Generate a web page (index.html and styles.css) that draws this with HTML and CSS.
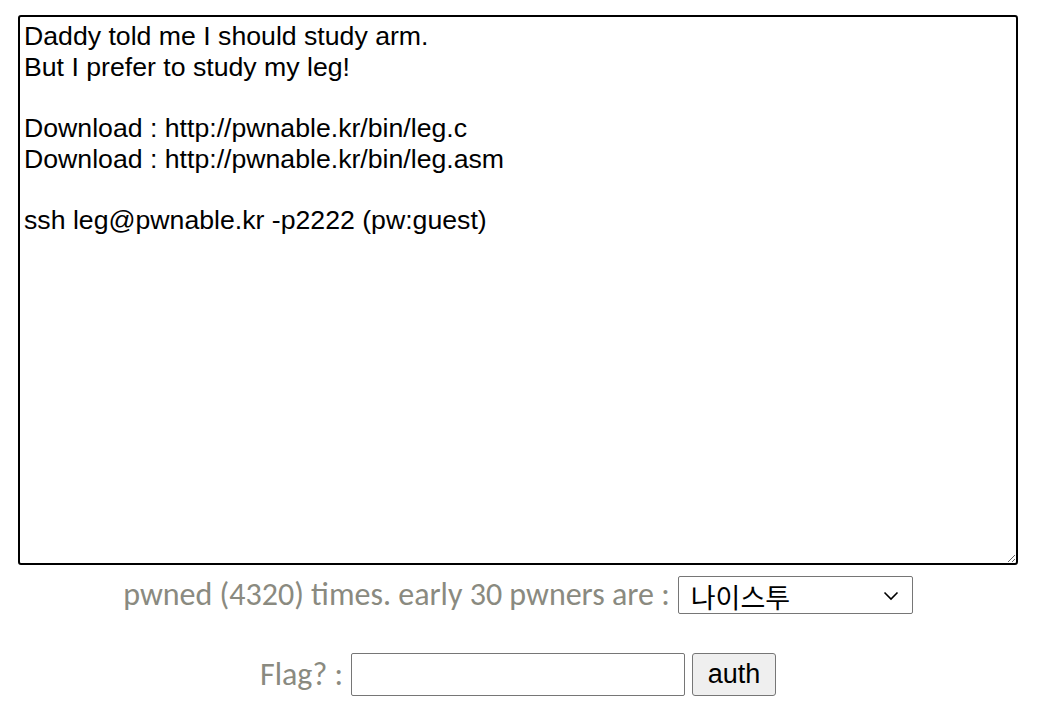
FILE: index.html
```html
<!DOCTYPE html>
<html>
<head>
<meta charset="utf-8">
<link rel="stylesheet" href="styles.css">
</head>
<body>
<div class="page">
<textarea class="desc" readonly>Daddy told me I should study arm.
But I prefer to study my leg!

Download : http://pwnable.kr/bin/leg.c
Download : http://pwnable.kr/bin/leg.asm

ssh leg@pwnable.kr -p2222 (pw:guest)
</textarea>
<div class="row stats">
<span class="label">pwned (4320) times. early 30 pwners are :</span>
<span class="select-wrap">
<select class="pwners"><option>나이스투</option></select>
<svg class="chev" width="16" height="10" viewBox="0 0 16 10"><path d="M1.5 1.5 L8 8 L14.5 1.5" fill="none" stroke="#000" stroke-width="1.6"/></svg>
</span>
</div>
<div class="row flag">
<span class="label">Flag? :</span>
<input class="flag-input" type="text">
<button class="auth">auth</button>
</div>
</div>
</body>
</html>
```

FILE: styles.css
```css
html, body {
  margin: 0;
  padding: 0;
  background: #ffffff;
}
.page {
  width: 1000px;
  padding: 15px 0 0 18px;
}
.desc {
  display: block;
  box-sizing: border-box;
  width: 1000px;
  height: 550px;
  margin: 0;
  border: 2px solid #000000;
  border-radius: 3px;
  padding: 4px 4px;
  font-family: "Liberation Sans", Arial, sans-serif;
  font-size: 26.67px;
  line-height: 1.15;
  color: #000000;
  resize: both;
  outline: none;
}
.row {
  display: flex;
  justify-content: center;
  align-items: center;
}
.stats {
  margin-top: 11px;
  height: 38px;
}
.flag {
  margin-top: 39px;
  height: 43px;
}
.label {
  font-family: Calibri, Carlito, "Open Sans", sans-serif;
  font-size: 32px;
  line-height: 38px;
  color: #8a8a80;
  margin-right: 8px;
}
.select-wrap {
  position: relative;
  display: inline-block;
  height: 38px;
}
.pwners {
  -webkit-appearance: none;
  appearance: none;
  box-sizing: border-box;
  width: 235px;
  height: 38px;
  margin: 0;
  border: 1px solid #767676;
  border-radius: 2px;
  background: #ffffff;
  font-family: "Noto Sans CJK KR", sans-serif;
  font-size: 27px;
  padding: 0 0 0 12px;
  color: #000;
}
.chev {
  position: absolute;
  right: 14px;
  top: 15px;
  pointer-events: none;
}
.flag-input {
  box-sizing: border-box;
  width: 334px;
  height: 43px;
  border: 1px solid #767676;
  border-radius: 2px;
  margin: 0;
}
.auth {
  box-sizing: border-box;
  width: 84px;
  height: 43px;
  margin-left: 7px;
  border: 1px solid #767676;
  border-radius: 3px;
  background: #efefef;
  font-family: "Liberation Sans", Arial, sans-serif;
  font-size: 27px;
  color: #000;
  padding: 0;
}
```
